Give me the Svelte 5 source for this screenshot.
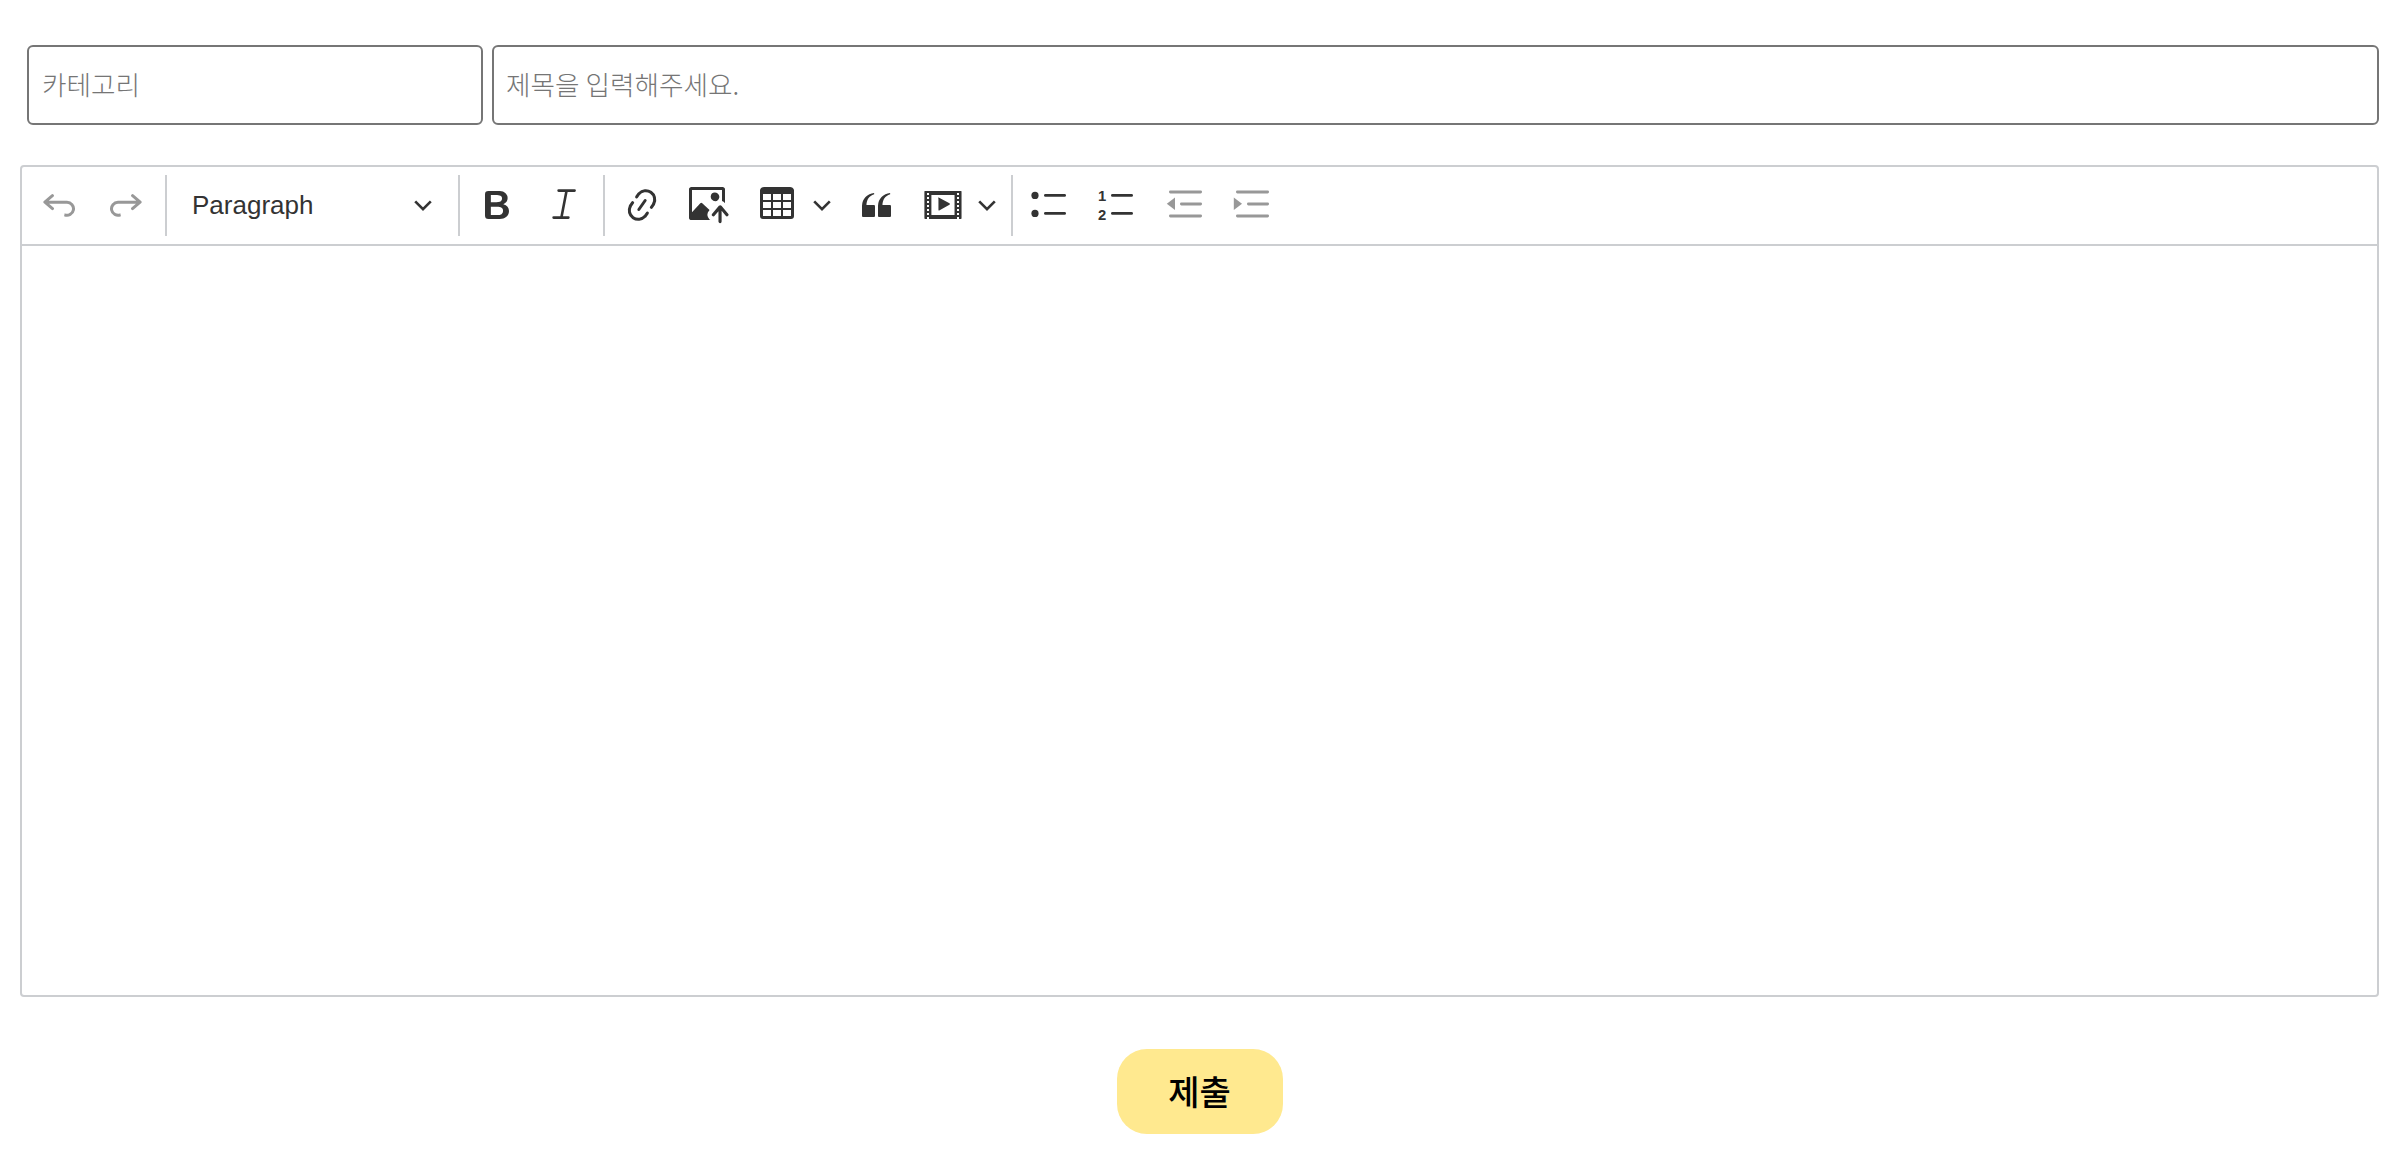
<script>
  const chevron = "M3.5 7 10 13.5 16.5 7";
</script>

<div class="page">
  <div class="fields">
    <input class="category" type="text" placeholder="카테고리" />
    <input class="title" type="text" placeholder="제목을 입력해주세요." />
  </div>

  <div class="editor">
    <div class="toolbar">
      <button class="btn off" aria-label="Undo">
        <svg viewBox="0 0 20 20"><path d="m5.042 9.367 2.189 1.837a.75.75 0 0 1-.965 1.149l-3.788-3.18a.747.747 0 0 1-.21-.284.75.75 0 0 1 .17-.945L6.23 4.762a.75.75 0 1 1 .964 1.15L4.863 7.866h8.917A.75.75 0 0 1 14 7.9a4 4 0 1 1-1.477 7.718l.344-1.489a2.5 2.5 0 1 0 1.094-4.73l.008-.032H5.042z"/></svg>
      </button>
      <button class="btn off" aria-label="Redo">
        <svg viewBox="0 0 20 20"><path d="m14.958 9.367-2.189 1.837a.75.75 0 0 0 .965 1.149l3.788-3.18a.747.747 0 0 0 .21-.284.75.75 0 0 0-.17-.945L13.77 4.762a.75.75 0 1 0-.964 1.15l2.331 1.955H6.22A.75.75 0 0 0 6 7.9a4 4 0 1 0 1.477 7.718l-.344-1.489A2.5 2.5 0 1 1 6.039 9.4l-.008-.032h8.927z"/></svg>
      </button>
      <span class="sep push"></span>

      <button class="heading">
        <span>Paragraph</span>
        <svg class="chev" viewBox="0 0 20 20"><path d={chevron}/></svg>
      </button>
      <span class="sep"></span>

      <button class="btn" aria-label="Bold">
        <svg viewBox="0 0 20 20"><path d="M10.187 17H5.773c-.637 0-1.092-.138-1.364-.415-.273-.277-.409-.718-.409-1.323V4.738c0-.617.14-1.062.419-1.332.279-.27.73-.406 1.354-.406h4.68c.69 0 1.288.041 1.793.124.506.083.96.242 1.36.478.341.197.644.447.906.75a3.262 3.262 0 0 1 .808 2.162c0 1.401-.722 2.426-2.167 3.075C15.05 10.175 16 11.315 16 13.01a3.756 3.756 0 0 1-2.034 3.351 5.1 5.1 0 0 1-1.626.488c-.593.1-1.31.15-2.153.15zm-.217-6.098H6.927v4.14h3.142c1.974 0 2.961-.7 2.961-2.1 0-.718-.252-1.237-.756-1.56-.504-.32-1.29-.48-2.304-.48zM6.927 4.98v3.659h2.694c.766 0 1.356-.07 1.773-.21.41-.14.7-.39.882-.745.16-.28.24-.583.24-.917 0-.707-.263-1.18-.789-1.416-.526-.238-1.33-.355-2.41-.355l-2.39-.016z"/></svg>
      </button>
      <button class="btn" aria-label="Italic">
        <svg class="outline" viewBox="0 0 20 20"><path d="M7.3 2.8h8M4.8 16.3h7.4M11.3 2.8 8.7 16.3"/></svg>
      </button>
      <span class="sep push"></span>

      <button class="btn" aria-label="Link">
        <svg viewBox="0 0 20 20"><path d="m11.077 15 .991-1.416a.75.75 0 1 1 1.229.86l-1.148 1.64a.748.748 0 0 1-.217.206 5.251 5.251 0 0 1-8.503-5.955.741.741 0 0 1 .12-.274l1.147-1.639a.75.75 0 1 1 1.228.86L4.933 10.7l.006.003a3.75 3.75 0 0 0 6.132 4.294l.006.003zm5.494-5.335a.748.748 0 0 1-.12.274l-1.147 1.639a.75.75 0 1 1-1.228-.86l.86-1.23a3.75 3.75 0 0 0-6.144-4.301l-.86 1.229a.75.75 0 0 1-1.229-.86l1.148-1.64a.748.748 0 0 1 .217-.206 5.251 5.251 0 0 1 8.503 5.955zm-4.563-2.532a.75.75 0 0 1 .184 1.045l-3.155 4.505a.75.75 0 1 1-1.229-.86l3.155-4.506a.75.75 0 0 1 1.045-.184z"/></svg>
      </button>
      <button class="btn" aria-label="Upload image">
        <svg viewBox="0 0 20 20"><path d="M1.201 1C.538 1 0 1.47 0 2.1v14.363c0 .64.534 1.037 1.186 1.037h9.494a2.97 2.97 0 0 1-.414-.287 2.998 2.998 0 0 1-1.055-2.03 3.003 3.003 0 0 1 .693-2.185l.383-.455-.02.018-3.65-3.41a.695.695 0 0 0-.957-.034L1.5 13.6V2.5h15v5.535a2.97 2.97 0 0 1 1.412.932l.088.105V2.1c0-.63-.547-1.1-1.2-1.1H1.202Zm11.713 2.803a2.146 2.146 0 0 0-2.049 1.992 2.14 2.14 0 0 0 1.28 2.096 2.13 2.13 0 0 0 2.644-3.11 2.134 2.134 0 0 0-1.875-.978ZM15.522 19.1a.79.79 0 0 0 .79-.79v-5.373l2.059 2.455a.79.79 0 1 0 1.211-1.015l-3.352-3.995a.79.79 0 0 0-.995-.179.784.784 0 0 0-.299.221l-3.35 3.99a.79.79 0 1 0 1.21 1.017l1.936-2.306v5.185c0 .436.353.79.79.79Z"/></svg>
      </button>
      <button class="btn push-1" aria-label="Table">
        <svg viewBox="0 0 20 20"><path transform="translate(0 -1.5)" d="M3 6v3h4V6H3zm0 4v3h4v-3H3zm0 4v3h4v-3H3zm5 3h4v-3H8v3zm5 0h4v-3h-4v3zm4-4v-3h-4v3h4zm0-4V6h-4v3h4zm1.5 8a1.5 1.5 0 0 1-1.5 1.5H3A1.5 1.5 0 0 1 1.5 17V4c.222-.863 1.068-1.5 2-1.5h13c.932 0 1.778.637 2 1.5v13zM12 10H8v3h4v-3zm0-4H8v3h4V6z"/></svg>
      </button>
      <span class="arrow first"><svg class="chev" viewBox="0 0 20 20"><path d={chevron}/></svg></span>
      <button class="btn" aria-label="Block quote">
        <svg viewBox="0 0 20 20"><path d="M3 10.423a6.5 6.5 0 0 1 6.056-6.408l.038.67C6.448 5.423 5.354 7.663 5.22 10H9c.552 0 .5.432.5.986v4.511c0 .554-.448.503-1 .503h-5c-.552 0-.5-.449-.5-1.003v-4.574zm8 0a6.5 6.5 0 0 1 6.056-6.408l.038.67c-2.646.739-3.74 2.979-3.873 5.315H17c.552 0 .5.432.5.986v4.511c0 .554-.448.503-1 .503h-5c-.552 0-.5-.449-.5-1.003v-4.574z"/></svg>
      </button>
      <button class="btn" aria-label="Media">
        <svg viewBox="0 0 20 20"><path fill-rule="evenodd" d="M18.68 3.03c.6 0 .59-.03.59.55v12.84c0 .59.01.56-.59.56H1.29c-.6 0-.59.03-.59-.56V3.58c0-.58-.01-.55.6-.55h17.38zM15.77 15V5H4.2v10h11.57zM2 4v1h1V4H2zm0 2v1h1V6H2zm0 2v1h1V8H2zm0 2v1h1v-1H2zm0 2v1h1v-1H2zm0 2v1h1v-1H2zm0 2v1h1v-1H2zM17 4v1h1V4h-1zm0 2v1h1V6h-1zm0 2v1h1V8h-1zm0 2v1h1v-1h-1zm0 2v1h1v-1h-1zm0 2v1h1v-1h-1zm0 2v1h1v-1h-1zM7.5 6.677a.4.4 0 0 1 .593-.351l5.133 2.824a.4.4 0 0 1 0 .7l-4.91 2.824a.4.4 0 0 1-.593-.35V6.676z"/></svg>
      </button>
      <span class="arrow second"><svg class="chev" viewBox="0 0 20 20"><path d={chevron}/></svg></span>
      <span class="sep tight"></span>

      <button class="btn" aria-label="Bulleted list">
        <svg viewBox="0 0 20 20">
          <circle cx="3.5" cy="5.2" r="1.8"/><circle cx="3.5" cy="14.2" r="1.8"/>
          <rect x="8" y="4.5" width="11" height="1.4" rx=".7"/><rect x="8" y="13.5" width="11" height="1.4" rx=".7"/>
        </svg>
      </button>
      <button class="btn spaced" aria-label="Numbered list">
        <svg viewBox="0 0 20 20">
          <text class="num" x="3.6" y="8">1</text><text class="num" x="3.6" y="17.6">2</text>
          <rect x="8" y="4.5" width="11" height="1.4" rx=".7"/><rect x="8" y="13.5" width="11" height="1.4" rx=".7"/>
        </svg>
      </button>
      <button class="btn off" aria-label="Outdent">
        <svg viewBox="0 0 20 20">
          <rect x="2.5" y="2.7" width="16.5" height="1.5" rx=".7"/><rect x="8" y="8.7" width="11" height="1.5" rx=".7"/><rect x="2.5" y="14.7" width="16.5" height="1.5" rx=".7"/>
          <path d="M5.5 6.3v6.2L1.4 9.4z"/>
        </svg>
      </button>
      <button class="btn off" aria-label="Indent">
        <svg viewBox="0 0 20 20">
          <rect x="2.5" y="2.7" width="16.5" height="1.5" rx=".7"/><rect x="8" y="8.7" width="11" height="1.5" rx=".7"/><rect x="2.5" y="14.7" width="16.5" height="1.5" rx=".7"/>
          <path d="M1.4 6.3v6.2l4.1-3.1z"/>
        </svg>
      </button>
    </div>
    <div class="content"></div>
  </div>

  <div class="actions">
    <button class="submit">제출</button>
  </div>
</div>

<style>
  :global(body) {
    margin: 0;
    background: #fff;
  }

  .page {
    padding: 45px 25px 0 20px;
    font-family: "Liberation Sans", "Noto Sans CJK KR", Arial, sans-serif;
  }

  .fields {
    display: flex;
    gap: 9px;
    padding: 0 0 0 7px;
  }

  input {
    box-sizing: border-box;
    height: 80px;
    padding: 0 12px 3px;
    border: 2px solid #767676;
    border-radius: 6px;
    font-family: "Noto Sans CJK KR", "Liberation Sans", sans-serif;
    font-size: 26.67px;
    font-weight: 300;
    background: #fff;
  }

  input::placeholder {
    color: #757575;
    opacity: 1;
  }

  .category {
    width: 456px;
    flex: none;
    padding-left: 13px;
  }

  .title {
    flex: 1;
    min-width: 0;
  }

  .editor {
    box-sizing: border-box;
    height: 832px;
    margin-top: 40px;
    border: 2px solid #ccced1;
    border-radius: 4px;
    display: flex;
    flex-direction: column;
  }

  .toolbar {
    box-sizing: border-box;
    height: 79px;
    flex: none;
    padding: 0 0 1px 7px;
    display: flex;
    align-items: center;
    border-bottom: 2px solid #ccced1;
    color: #333;
  }

  button {
    border: 0;
    padding: 0;
    background: none;
    font: inherit;
    color: inherit;
  }

  .btn {
    flex: none;
    width: 60px;
    height: 60px;
    margin-right: 7px;
    display: flex;
    align-items: center;
    justify-content: center;
  }

  .btn svg {
    width: 40px;
    height: 40px;
    fill: #333;
  }

  .btn svg.outline {
    fill: none;
    stroke: #333;
    stroke-width: 1.3;
    stroke-linecap: round;
  }

  .btn.off svg {
    opacity: 0.5;
  }

  .btn.push-1 {
    margin-left: 1px;
  }

  .btn.spaced {
    margin-right: 9px;
  }

  .num {
    font-family: "Liberation Sans", sans-serif;
    font-size: 7.4px;
    font-weight: 700;
    text-anchor: middle;
  }

  .sep {
    flex: none;
    width: 2px;
    height: 61px;
    margin-right: 7px;
    background: #ccced1;
  }

  .sep.push {
    margin-left: 2px;
  }

  .sep.tight {
    margin-right: 5px;
  }

  .heading {
    flex: none;
    box-sizing: border-box;
    width: 277px;
    height: 60px;
    margin-right: 7px;
    padding: 0 16px 0 18px;
    display: flex;
    align-items: center;
    justify-content: space-between;
    font-size: 26px;
    color: #333;
  }

  .arrow {
    flex: none;
    display: flex;
    justify-content: center;
    margin-left: -7px;
  }

  .arrow.first {
    width: 30px;
    margin-right: 9px;
  }

  .arrow.second {
    width: 28px;
    margin-right: 10px;
  }

  .chev {
    width: 24px;
    height: 24px;
    flex: none;
    fill: none;
    stroke: #333;
    stroke-width: 2.2;
  }

  .content {
    flex: 1;
  }

  .actions {
    display: flex;
    justify-content: center;
    margin-top: 52px;
  }

  .submit {
    width: 166px;
    height: 85px;
    padding-bottom: 3px;
    border-radius: 30px;
    background: #ffe98f;
    font-family: "Noto Sans CJK KR", "Liberation Sans", sans-serif;
    font-size: 34px;
    font-weight: 500;
    color: #000;
  }
</style>
